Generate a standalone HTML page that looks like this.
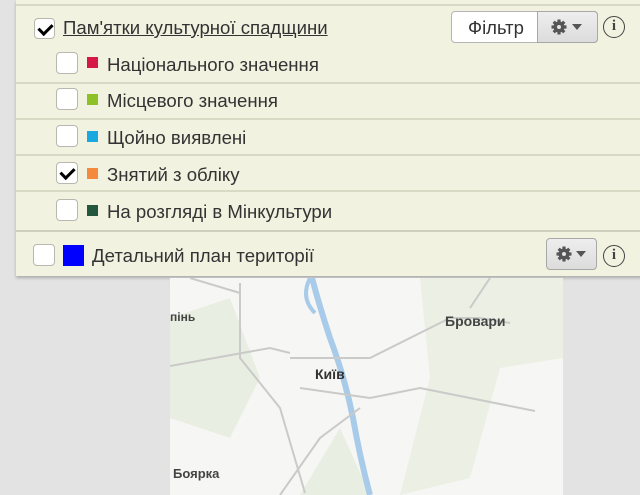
<!DOCTYPE html>
<html><head><meta charset="utf-8"><style>
*{box-sizing:border-box;margin:0;padding:0}
body{width:640px;height:495px;background:#e3e3e3;font-family:"Liberation Sans",sans-serif;position:relative;overflow:hidden;color:#333}
#panel{position:absolute;left:16px;top:0;width:630px;height:276px;background:#f1f2e0;box-shadow:0 2px 3px rgba(0,0,0,.25)}
.line{position:absolute;left:0;right:0;height:2px;background:#d9dac4}
.cb{position:absolute;width:22px;height:22px;background:#fff;border:1px solid #b8b8b0;border-radius:4px}
.cb.ck::after{content:"";position:absolute;left:6px;top:2px;width:6px;height:11px;border:solid #000;border-width:0 3px 3px 0;transform:rotate(45deg)}
.sq{position:absolute;width:11px;height:11px}
.t{position:absolute;font-size:18.6px;line-height:20px;white-space:nowrap}
.btn{position:absolute;border:1px solid #b5b5b5;border-radius:4px;background:#fff}
.gear{position:absolute;background:linear-gradient(#eee,#dcdcdc);border:1px solid #a8a8a8;border-radius:4px}
.info{position:absolute;width:22px;height:22px;border:1.5px solid #444;border-radius:50%;font:bold 15px "Liberation Serif",serif;text-align:center;line-height:19px;color:#444}
#map{position:absolute;left:170px;top:278px;width:393px;height:217px;background:#f6f6f4;overflow:hidden}
</style></head><body>
<svg width="0" height="0" style="position:absolute"><defs><g id="g"><circle cx="9" cy="9" r="5.5" fill="#555"/><g stroke="#555" stroke-width="3.2"><path d="M9 1.5V16.5M1.5 9H16.5M3.7 3.7L14.3 14.3M14.3 3.7L3.7 14.3"/></g><circle cx="9" cy="9" r="2" fill="#e4e4e4"/></g></defs></svg>
<div id="panel">
<div class="line" style="top:4px"></div>
<div class="cb ck" style="left:18px;top:18px;width:21px;height:21px"></div>
<div class="t" style="left:47px;top:18px;text-decoration:underline">Пам'ятки культурної спадщини</div>
<div class="btn" style="left:435px;top:11px;width:147px;height:32px"><span style="position:absolute;left:16px;top:5px;font-size:18.5px">Фільтр</span>
<div class="gear" style="left:85px;top:-1px;width:61px;height:32px;border-radius:0 4px 4px 0"><svg style="position:absolute;left:12px;top:6px" width="18" height="18"><use href="#g"/></svg><span style="position:absolute;left:34px;top:12px;border:5px solid transparent;border-top:6px solid #555"></span></div></div>
<div class="info" style="left:587px;top:16px">i</div>

<div class="cb" style="left:40px;top:52px"></div><div class="sq" style="left:71px;top:57px;background:#d51845"></div><div class="t" style="left:91px;top:55px">Національного значення</div>
<div class="line" style="top:82px"></div>
<div class="cb" style="left:40px;top:88px"></div><div class="sq" style="left:71px;top:94px;background:#8cc228"></div><div class="t" style="left:91px;top:91px">Місцевого значення</div>
<div class="line" style="top:118px"></div>
<div class="cb" style="left:40px;top:125px"></div><div class="sq" style="left:71px;top:131px;background:#1aa9de"></div><div class="t" style="left:91px;top:128px">Щойно виявлені</div>
<div class="line" style="top:154px"></div>
<div class="cb ck" style="left:40px;top:162px"></div><div class="sq" style="left:71px;top:168px;background:#f38a3c"></div><div class="t" style="left:91px;top:165px">Знятий з обліку</div>
<div class="line" style="top:190px"></div>
<div class="cb" style="left:40px;top:199px"></div><div class="sq" style="left:71px;top:205px;background:#24573d"></div><div class="t" style="left:91px;top:202px">На розгляді в Мінкультури</div>
<div class="line" style="top:230px;background:#cfd0bb"></div>
<div class="cb" style="left:17px;top:244px"></div><div class="sq" style="left:47px;top:245px;width:21px;height:21px;background:#0000ff"></div><div class="t" style="left:76px;top:246px">Детальний план території</div>
<div class="gear" style="left:530px;top:238px;width:51px;height:32px"><svg style="position:absolute;left:8px;top:6px" width="18" height="18"><use href="#g"/></svg><span style="position:absolute;left:29px;top:12px;border:5px solid transparent;border-top:6px solid #555"></span></div>
<div class="info" style="left:587px;top:245px">i</div>
</div>
<div id="map"><svg width="393" height="217">
<path d="M0 40 L60 20 L90 100 L60 160 L0 140Z" fill="#e9eee2"/>
<path d="M250 0 L393 0 L393 80 L330 90 L300 200 L230 217 L260 100Z" fill="#e8eee0" opacity=".8"/>
<path d="M130 217 L170 150 L200 217Z" fill="#e9eee2"/>
<path d="M142 0 Q150 30 160 60 Q175 100 183 140 Q190 180 200 217" stroke="#a9cbea" stroke-width="6" fill="none"/>
<path d="M140 0 Q130 20 145 35" stroke="#a9cbea" stroke-width="4" fill="none"/>
<g stroke="#cacac8" stroke-width="2" fill="none">
<path d="M0 88 L100 70 L120 75"/><path d="M70 5 L70 80 L110 130 L135 215"/>
<path d="M120 80 L200 80 L280 40 L310 40"/><path d="M310 40 L340 45"/>
<path d="M130 110 L200 120 L250 110 L300 120 L365 133"/><path d="M20 0 L70 15"/>
<path d="M190 130 L150 160 L110 217"/><path d="M320 0 L300 30"/>
</g>
<text x="0" y="43" font-size="12" font-weight="bold" fill="#444" font-family="Liberation Sans">пінь</text>
<text x="275" y="48" font-size="14" font-weight="bold" fill="#444" font-family="Liberation Sans">Бровари</text>
<text x="145" y="101" font-size="14" font-weight="bold" fill="#333" font-family="Liberation Sans">Київ</text>
<text x="3" y="200" font-size="13" font-weight="bold" fill="#444" font-family="Liberation Sans">Боярка</text>
</svg></div>
</body></html>
